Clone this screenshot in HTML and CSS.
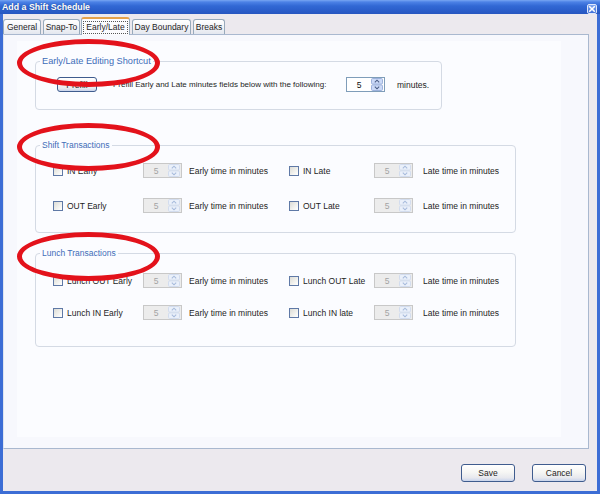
FILE: index.html
```html
<!DOCTYPE html>
<html>
<head>
<meta charset="utf-8">
<title>Add a Shift Schedule</title>
<link rel="stylesheet" href="styles.css">
</head>
<body>
<div class="win">
  <div class="titlebar">
    <span class="title">Add a Shift Schedule</span>
    <span class="close"><svg width="8" height="8" viewBox="0 0 8 8"><path d="M1.2 1.2L6.8 6.8M6.8 1.2L1.2 6.8" stroke="#fff" stroke-width="1.6"/></svg></span>
  </div>
  <div class="frame">
    <div class="tabs">
      <span class="tab t-general">General</span>
      <span class="tab t-snap">Snap-To</span>
      <span class="tab t-early active"><span class="focus">Early/Late</span></span>
      <span class="tab t-day">Day Boundary</span>
      <span class="tab t-breaks">Breaks</span>
    </div>
    <div class="panel">
      <div class="inner">
        <fieldset class="group g1">
          <legend>Early/Late Editing Shortcut</legend>
          <div class="row">
            <button class="btn prefill">Prefill</button>
            <span class="lead">Prefill Early and Late minutes fields below with the following:</span>
            <span class="spin on"><span class="val">5</span><span class="arrows"><svg width="12" height="13" viewBox="0 0 12 13"><rect x="0.5" y="0.5" width="11" height="5.6" rx="1.2" fill="#cbd9f7" stroke="#9db2dc"/><rect x="0.5" y="6.9" width="11" height="5.6" rx="1.2" fill="#cbd9f7" stroke="#9db2dc"/><path d="M3.8 4.3L6 2.2L8.2 4.3" stroke="#4b5f86" stroke-width="1.1" fill="none"/><path d="M3.8 8.7L6 10.8L8.2 8.7" stroke="#4b5f86" stroke-width="1.1" fill="none"/></svg></span></span>
            <span class="tail">minutes.</span>
          </div>
        </fieldset>

        <fieldset class="group g2">
          <legend>Shift Transactions</legend>
          <div class="trow">
            <span class="c1"><span class="cb"></span>IN Early</span>
            <span class="spin off"><span class="val">5</span><span class="arrows"><svg width="12" height="13" viewBox="0 0 12 13"><rect x="0.5" y="0.5" width="11" height="5.6" rx="1.2" fill="#eaf0fa" stroke="#d2dcee"/><rect x="0.5" y="6.9" width="11" height="5.6" rx="1.2" fill="#eaf0fa" stroke="#d2dcee"/><path d="M3.8 4.3L6 2.2L8.2 4.3" stroke="#a7bbdc" stroke-width="1.1" fill="none"/><path d="M3.8 8.7L6 10.8L8.2 8.7" stroke="#a7bbdc" stroke-width="1.1" fill="none"/></svg></span></span>
            <span class="c3">Early time in minutes</span>
            <span class="c4"><span class="cb"></span>IN Late</span>
            <span class="spin off"><span class="val">5</span><span class="arrows"><svg width="12" height="13" viewBox="0 0 12 13"><rect x="0.5" y="0.5" width="11" height="5.6" rx="1.2" fill="#eaf0fa" stroke="#d2dcee"/><rect x="0.5" y="6.9" width="11" height="5.6" rx="1.2" fill="#eaf0fa" stroke="#d2dcee"/><path d="M3.8 4.3L6 2.2L8.2 4.3" stroke="#a7bbdc" stroke-width="1.1" fill="none"/><path d="M3.8 8.7L6 10.8L8.2 8.7" stroke="#a7bbdc" stroke-width="1.1" fill="none"/></svg></span></span>
            <span class="c6">Late time in minutes</span>
          </div>
          <div class="trow">
            <span class="c1"><span class="cb"></span>OUT Early</span>
            <span class="spin off"><span class="val">5</span><span class="arrows"><svg width="12" height="13" viewBox="0 0 12 13"><rect x="0.5" y="0.5" width="11" height="5.6" rx="1.2" fill="#eaf0fa" stroke="#d2dcee"/><rect x="0.5" y="6.9" width="11" height="5.6" rx="1.2" fill="#eaf0fa" stroke="#d2dcee"/><path d="M3.8 4.3L6 2.2L8.2 4.3" stroke="#a7bbdc" stroke-width="1.1" fill="none"/><path d="M3.8 8.7L6 10.8L8.2 8.7" stroke="#a7bbdc" stroke-width="1.1" fill="none"/></svg></span></span>
            <span class="c3">Early time in minutes</span>
            <span class="c4"><span class="cb"></span>OUT Late</span>
            <span class="spin off"><span class="val">5</span><span class="arrows"><svg width="12" height="13" viewBox="0 0 12 13"><rect x="0.5" y="0.5" width="11" height="5.6" rx="1.2" fill="#eaf0fa" stroke="#d2dcee"/><rect x="0.5" y="6.9" width="11" height="5.6" rx="1.2" fill="#eaf0fa" stroke="#d2dcee"/><path d="M3.8 4.3L6 2.2L8.2 4.3" stroke="#a7bbdc" stroke-width="1.1" fill="none"/><path d="M3.8 8.7L6 10.8L8.2 8.7" stroke="#a7bbdc" stroke-width="1.1" fill="none"/></svg></span></span>
            <span class="c6">Late time in minutes</span>
          </div>
        </fieldset>

        <fieldset class="group g3">
          <legend>Lunch Transactions</legend>
          <div class="trow">
            <span class="c1"><span class="cb"></span>Lunch OUT Early</span>
            <span class="spin off"><span class="val">5</span><span class="arrows"><svg width="12" height="13" viewBox="0 0 12 13"><rect x="0.5" y="0.5" width="11" height="5.6" rx="1.2" fill="#eaf0fa" stroke="#d2dcee"/><rect x="0.5" y="6.9" width="11" height="5.6" rx="1.2" fill="#eaf0fa" stroke="#d2dcee"/><path d="M3.8 4.3L6 2.2L8.2 4.3" stroke="#a7bbdc" stroke-width="1.1" fill="none"/><path d="M3.8 8.7L6 10.8L8.2 8.7" stroke="#a7bbdc" stroke-width="1.1" fill="none"/></svg></span></span>
            <span class="c3">Early time in minutes</span>
            <span class="c4"><span class="cb"></span>Lunch OUT Late</span>
            <span class="spin off"><span class="val">5</span><span class="arrows"><svg width="12" height="13" viewBox="0 0 12 13"><rect x="0.5" y="0.5" width="11" height="5.6" rx="1.2" fill="#eaf0fa" stroke="#d2dcee"/><rect x="0.5" y="6.9" width="11" height="5.6" rx="1.2" fill="#eaf0fa" stroke="#d2dcee"/><path d="M3.8 4.3L6 2.2L8.2 4.3" stroke="#a7bbdc" stroke-width="1.1" fill="none"/><path d="M3.8 8.7L6 10.8L8.2 8.7" stroke="#a7bbdc" stroke-width="1.1" fill="none"/></svg></span></span>
            <span class="c6">Late time in minutes</span>
          </div>
          <div class="trow">
            <span class="c1"><span class="cb"></span>Lunch IN Early</span>
            <span class="spin off"><span class="val">5</span><span class="arrows"><svg width="12" height="13" viewBox="0 0 12 13"><rect x="0.5" y="0.5" width="11" height="5.6" rx="1.2" fill="#eaf0fa" stroke="#d2dcee"/><rect x="0.5" y="6.9" width="11" height="5.6" rx="1.2" fill="#eaf0fa" stroke="#d2dcee"/><path d="M3.8 4.3L6 2.2L8.2 4.3" stroke="#a7bbdc" stroke-width="1.1" fill="none"/><path d="M3.8 8.7L6 10.8L8.2 8.7" stroke="#a7bbdc" stroke-width="1.1" fill="none"/></svg></span></span>
            <span class="c3">Early time in minutes</span>
            <span class="c4"><span class="cb"></span>Lunch IN late</span>
            <span class="spin off"><span class="val">5</span><span class="arrows"><svg width="12" height="13" viewBox="0 0 12 13"><rect x="0.5" y="0.5" width="11" height="5.6" rx="1.2" fill="#eaf0fa" stroke="#d2dcee"/><rect x="0.5" y="6.9" width="11" height="5.6" rx="1.2" fill="#eaf0fa" stroke="#d2dcee"/><path d="M3.8 4.3L6 2.2L8.2 4.3" stroke="#a7bbdc" stroke-width="1.1" fill="none"/><path d="M3.8 8.7L6 10.8L8.2 8.7" stroke="#a7bbdc" stroke-width="1.1" fill="none"/></svg></span></span>
            <span class="c6">Late time in minutes</span>
          </div>
        </fieldset>
      </div>
    </div>
    <div class="footer">
      <button class="btn action">Save</button>
      <button class="btn action">Cancel</button>
    </div>
  </div>
  <div class="ring r1"></div>
  <div class="ring r2"></div>
  <div class="ring r3"></div>
</div>
</body>
</html>
```

FILE: styles.css
```css
* { box-sizing: border-box; }
html, body { margin: 0; padding: 0; }
body {
  width: 600px;
  height: 494px;
  overflow: hidden;
  background: #ffffff;
  font-family: "Liberation Sans", Arial, sans-serif;
  font-size: 8.5px;
  color: #1e1e1e;
}
.win {
  position: relative;
  width: 600px;
  height: 494px;
  display: flex;
  flex-direction: column;
}
.titlebar {
  flex: none;
  height: 14px;
  display: flex;
  align-items: center;
  justify-content: space-between;
  padding: 0 3px 0 2px;
  background: linear-gradient(#78a6f2 0, #4c82e6 2px, #3168d4 6px, #2b5fcb 10px, #2656c0 14px);
}
.title {
  color: #ffffff;
  font-weight: bold;
  font-size: 8.8px;
  text-shadow: 0 0 1px #17387f;
}
.close {
  width: 10px;
  height: 10px;
  margin-top: 3px;
  display: flex;
  align-items: center;
  justify-content: center;
  border: 1px solid #dfe8fb;
  border-radius: 2px;
  background: linear-gradient(#7fa6f0, #3f70d8);
}
.frame {
  flex: 1;
  display: flex;
  flex-direction: column;
  background: #ece9ee;
  border: 3px solid #3c6dd5;
  border-top: 0;
}
.tabs {
  flex: none;
  height: 20px;
  display: flex;
  align-items: flex-end;
  gap: 2px;
}
.tab {
  height: 15px;
  display: flex;
  align-items: center;
  justify-content: center;
  border: 1px solid #98aabb;
  border-bottom: 0;
  border-radius: 3px 3px 0 0;
  background: linear-gradient(#ffffff, #f3f4f7 50%, #e3e7ef);
  white-space: nowrap;
}
.t-general { width: 38px; }
.t-snap { width: 37px; }
.t-early { width: 49px; }
.t-day { width: 59px; }
.t-breaks { width: 32px; }
.tab.active {
  position: relative;
  z-index: 1;
  height: 18px;
  margin-left: -1px;
  margin-bottom: -1px;
  background: #fbfbfe;
  border-top: 2px solid #e5a24a;
}
.focus {
  border: 1px dotted #555555;
  padding: 0 2px;
  line-height: 11px;
}
.panel {
  flex: none;
  height: 415px;
  margin-right: 8px;
  padding: 6px 27px 11px 13px;
  border: 1px solid #a9b8cf;
  border-left-color: #dfe5ef;
  background: #f7f8fd;
}
.inner {
  height: 396px;
  background: #fbfcff;
  padding-top: 15px;
  padding-left: 18px;
}
.group {
  margin: 0;
  padding: 0;
  min-width: 0;
  border: 1px solid #d4dae4;
  border-radius: 4px;
}
.group legend {
  margin-left: 4px;
  padding: 0 2px;
  color: #3e6cb8;
  line-height: 11px;
}
.g1 legend { font-size: 9.2px; }
.g1 {
  width: 407px;
  padding: 10px 0 17px 0;
}
.g2 {
  width: 481px;
  margin-top: 30px;
  padding: 12px 0 19px 0;
}
.g3 {
  width: 481px;
  margin-top: 15px;
  padding: 14px 0 26px 0;
}
.row {
  display: flex;
  align-items: center;
  height: 15px;
  padding-left: 21px;
}
.lead {
  width: 233px;
  margin-left: 16px;
  white-space: nowrap;
  font-size: 8px;
}
.tail { margin-left: 12px; }
.trow {
  display: flex;
  align-items: center;
  height: 15px;
  padding-left: 17px;
}
.g2 .trow + .trow { margin-top: 20px; }
.g3 .trow + .trow { margin-top: 17px; }
.c1 { width: 90px; display: flex; align-items: center; white-space: nowrap; }
.c3 { width: 100px; margin-left: 7px; white-space: nowrap; }
.c4 { width: 85px; display: flex; align-items: center; white-space: nowrap; }
.c6 { margin-left: 10px; white-space: nowrap; }
.cb {
  flex: none;
  width: 10px;
  height: 10px;
  margin-right: 4px;
  border: 1px solid #5f79a6;
  background: linear-gradient(135deg, #dcdcd6, #f6f6f3 70%, #ffffff);
}
.spin {
  flex: none;
  width: 39px;
  height: 15px;
  display: flex;
  align-items: center;
  border: 1px solid #c8c8c8;
  background: #ececec;
}
.spin .val {
  flex: 1;
  text-align: center;
  color: #a3a3a3;
}
.spin .arrows {
  display: flex;
  padding-right: 1px;
}
.spin.on {
  border-color: #7f9db9;
  background: #ffffff;
}
.spin.on .val { color: #111111; }
.btn {
  font: inherit;
  color: #1e1e1e;
  padding: 0;
  border: 1px solid #3f5c8e;
  border-radius: 3px;
  background: linear-gradient(#ffffff 0, #f6f6f4 45%, #e7e8ee 80%, #c8d4ec 100%);
}
.prefill {
  width: 40px;
  height: 15px;
}
.footer {
  flex: 1;
  display: flex;
  justify-content: flex-end;
  align-items: flex-start;
  gap: 17px;
  padding: 15px 11px 0 0;
}
.action {
  width: 54px;
  height: 18px;
}
.ring {
  position: absolute;
  left: 17px;
  width: 143px;
  height: 48px;
  border: 5px solid #e3121b;
  border-radius: 50%;
  z-index: 5;
}
.r1 { top: 39px; }
.r2 { top: 123px; }
.r3 { top: 232px; height: 49px; }
```
